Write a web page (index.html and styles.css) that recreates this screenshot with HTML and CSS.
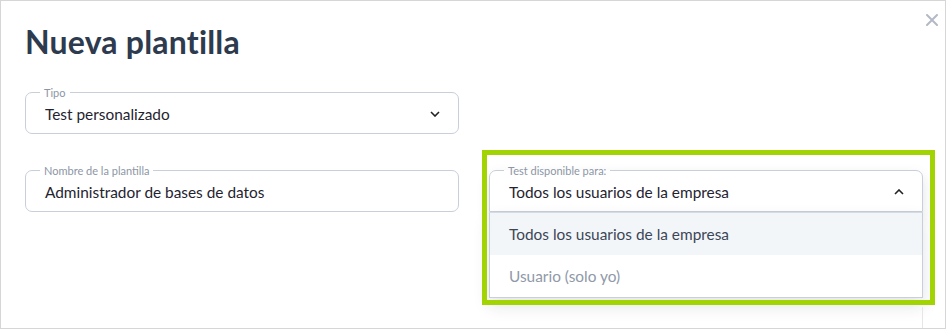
FILE: index.html
```html
<!DOCTYPE html>
<html>
<head>
  <title>Nueva plantilla</title>
  <link rel="stylesheet" href="styles.css">
</head>
<body>
  <div class="dialog">
    <button class="close" aria-label="Cerrar">
      <svg width="12" height="12" viewBox="0 0 12 12"><path d="M1 1L11 11M11 1L1 11" stroke="#b3bac5" stroke-width="2" stroke-linecap="round"/></svg>
    </button>
    <h1 class="title">Nueva plantilla</h1>

    <div class="form">
      <fieldset class="field">
        <legend>Tipo</legend>
        <span class="value">Test personalizado</span>
        <svg class="chevron" width="10" height="6" viewBox="0 0 10 6"><path d="M1 1L5 5L9 1" fill="none" stroke="#222" stroke-width="1.6"/></svg>
      </fieldset>
      <div></div>

      <fieldset class="field">
        <legend>Nombre de la plantilla</legend>
        <span class="value">Administrador de bases de datos</span>
      </fieldset>

      <div class="select-wrap">
        <fieldset class="field open">
          <legend>Test disponible para:</legend>
          <span class="value">Todos los usuarios de la empresa</span>
          <svg class="chevron" width="10" height="6" viewBox="0 0 10 6"><path d="M1 5L5 1L9 5" fill="none" stroke="#222" stroke-width="1.6"/></svg>
        </fieldset>
        <ul class="menu">
          <li class="option active">Todos los usuarios de la empresa</li>
          <li class="option muted">Usuario (solo yo)</li>
        </ul>
        <div class="highlight"></div>
      </div>
    </div>
    <div class="edge"></div>
  </div>
</body>
</html>
```

FILE: styles.css
```css
body {
  margin: 0;
  font-family: "Lato", "Noto Sans", sans-serif;
  background: #fff;
}

.dialog {
  position: relative;
  box-sizing: border-box;
  width: 946px;
  height: 329px;
  border: 1px solid #d6d6d6;
  padding: 0 24px;
  overflow: hidden;
}

.close {
  position: absolute;
  top: 13px;
  right: 7px;
  padding: 0;
  border: none;
  background: none;
  cursor: pointer;
}

.title {
  margin: 20px 0 0;
  font-size: 32px;
  font-weight: 700;
  line-height: 42px;
  color: #2e3a4d;
  letter-spacing: 0.2px;
}

.form {
  display: grid;
  grid-template-columns: 434px 434px;
  column-gap: 30px;
  row-gap: 37px;
  margin-top: 30px;
}

.field {
  position: relative;
  display: flex;
  align-items: center;
  justify-content: space-between;
  box-sizing: border-box;
  height: 47px;
  margin: -6px 0 0;
  padding: 0 19px 3px;
  border: 1px solid #c8cfd9;
  border-radius: 7px;
  background: #fff;
}

.field legend {
  margin-left: -5px;
  padding: 0 4px;
  font-size: 11px;
  line-height: 11px;
  color: #8c96a5;
}

.value {
  font-size: 15.4px;
  color: #1f2430;
}

.chevron {
  margin-right: -1px;
}

.select-wrap {
  position: relative;
}

.field.open {
  border-radius: 7px 7px 0 0;
  box-shadow: 0 6px 14px rgba(20, 30, 50, 0.12);
}

.menu {
  position: absolute;
  left: 0;
  right: 0;
  top: 41px;
  margin: 0;
  padding: 0;
  list-style: none;
  border: 1px solid #c8cfd9;
  border-top: 1px solid #d5dbe3;
  background: #fff;
  box-shadow: 0 8px 16px rgba(20, 30, 50, 0.12);
}

.option {
  height: 42px;
  line-height: 42px;
  padding: 0 19px;
  font-size: 15.4px;
}

.option.active {
  background: #f3f6f9;
  color: #3c4656;
}

.option.muted {
  color: #8f99a8;
}

.highlight {
  position: absolute;
  left: -7px;
  right: -12px;
  top: -21px;
  bottom: -93px;
  border: 5px solid #a2d404;
  pointer-events: none;
}

.edge {
  position: absolute;
  left: 921px;
  top: 306px;
  bottom: 0;
  width: 1px;
  background: #e4e6ea;
}
```
